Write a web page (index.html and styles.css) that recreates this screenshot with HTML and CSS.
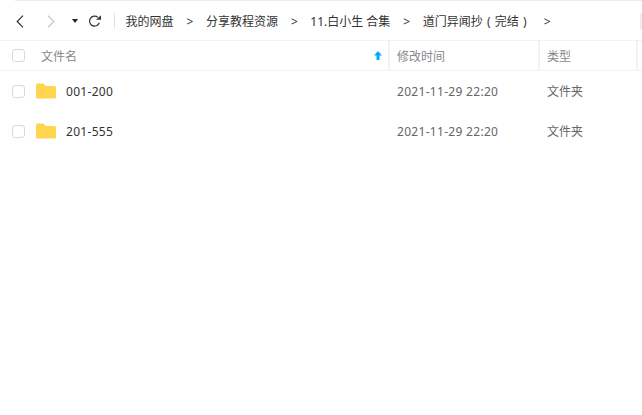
FILE: index.html
```html
<!DOCTYPE html>
<html lang="zh-CN">
<head>
  <meta charset="UTF-8" />
  <title>文件列表</title>
  <link rel="stylesheet" href="styles.css">
</head>
<body>

<div class="top-line"></div>

<div class="toolbar">
  <div class="nav">
    <svg class="nav-back" width="8" height="13" viewBox="0 0 8 13"><path d="M7 .7 1.200 6.500 7 12.300" fill="none" stroke="#333" stroke-width="1.200"/></svg>
    <svg class="nav-forward" width="8" height="13" viewBox="0 0 8 13"><path d="M1 .7 6.800 6.500 1 12.300" fill="none" stroke="#c4c4c4" stroke-width="1.200"/></svg>
    <span class="nav-drop"></span>
    <svg class="nav-refresh" width="13" height="12" viewBox="0 0 13 12"><path d="M11.300 7.800A5 5 0 1 1 9.800 2.300" fill="none" stroke="#333" stroke-width="1.200"/><path d="M8 4.800h5V.3z" fill="#333"/></svg>
  </div>
  <div class="crumbs">
    <span>我的网盘</span><i>&gt;</i>
    <span>分享教程资源</span><i>&gt;</i>
    <span>11.白小生 合集</span><i>&gt;</i>
    <span>道门异闻抄<span class="paren">(</span>完结<span class="paren">)</span></span><i>&gt;</i>
  </div>
  <div class="toolbar-end"></div>
</div>

<div class="list-head">
  <div class="col-check"><span class="check"></span></div>
  <div class="col-name">
    <span class="head-name">文件名</span>
    <svg class="sort-arrow" width="8" height="9" viewBox="0 0 8 9"><path d="M4 0 8 4.500H5.500V9h-3V4.500H0z" fill="#06a7ff"/></svg>
  </div>
  <div class="col-time">修改时间</div>
  <div class="col-type">类型</div>
</div>

<div class="row">
  <div class="col-check"><span class="check"></span></div>
  <div class="col-name">
    <svg class="folder" width="20" height="16" viewBox="0 0 20 16"><path d="M0 2a1.500 1.500 0 0 1 1.500-1.500h5.300c.7 0 1.100.3 1.500.8L9.500 3H18.500A1.500 1.500 0 0 1 20 4.500V14a1.500 1.500 0 0 1-1.500 1.500h-17A1.500 1.500 0 0 1 0 14z" fill="#ffd54f"/></svg>
    <span class="file-name">001-200</span>
  </div>
  <div class="col-time">2021-11-29 22:20</div>
  <div class="col-type">文件夹</div>
</div>

<div class="row">
  <div class="col-check"><span class="check"></span></div>
  <div class="col-name">
    <svg class="folder" width="20" height="16" viewBox="0 0 20 16"><path d="M0 2a1.500 1.500 0 0 1 1.500-1.500h5.300c.7 0 1.100.3 1.500.8L9.500 3H18.500A1.500 1.500 0 0 1 20 4.500V14a1.500 1.500 0 0 1-1.500 1.500h-17A1.500 1.500 0 0 1 0 14z" fill="#ffd54f"/></svg>
    <span class="file-name">201-555</span>
  </div>
  <div class="col-time">2021-11-29 22:20</div>
  <div class="col-type">文件夹</div>
</div>

</body>
</html>
```

FILE: styles.css
```css
body {
  margin: 0;
  background: #fff;
  color: #333;
  font-family: "Noto Sans", "Noto Sans CJK SC", sans-serif;
  font-size: 12px;
  line-height: 16px;
  overflow: hidden;
}

.top-line {
  height: 1px;
  margin-left: 15px;
  background: #ececec;
}

.toolbar {
  display: flex;
  align-items: center;
  height: 38px;
  padding-top: 1px;
  border-bottom: 1px solid #f2f2f2;
}

.nav {
  display: flex;
  align-items: center;
  width: 115px;
  height: 16px;
  padding-left: 16px;
  box-sizing: border-box;
  border-right: 1px solid #e0e0e0;
}

.nav-back {
  margin-right: 23px;
}

.nav-forward {
  margin-right: 17px;
}

.nav-drop {
  width: 0;
  height: 0;
  border-left: 3px solid transparent;
  border-right: 3px solid transparent;
  border-top: 4px solid #222;
  margin-right: 10px;
}

.crumbs {
  display: flex;
  align-items: center;
  flex: 1;
  padding: 1px 0 0 10.5px;
  color: #333;
}

.crumbs i {
  font-style: normal;
  margin: 0 12.5px 0 13px;
}

.paren {
  display: inline-block;
  width: 12px;
  text-align: center;
}

.toolbar-end {
  width: 2px;
  height: 16px;
  background: #eee;
}

.list-head,
.row {
  display: flex;
  align-items: center;
}

.list-head {
  height: 29px;
  border-bottom: 1px solid #f2f2f2;
  color: #888;
}

.row {
  height: 40px;
}

.col-check {
  display: flex;
  width: 36px;
  padding-left: 12px;
  box-sizing: border-box;
}

.check {
  width: 11px;
  height: 11px;
  border: 1px solid #d9d9d9;
  border-radius: 3px;
}

.col-name {
  display: flex;
  align-items: center;
  width: 352px;
  height: 100%;
  box-sizing: border-box;
}

.list-head .col-name {
  padding-left: 5px;
  padding-right: 6px;
  justify-content: space-between;
}

.head-name,
.file-name {
  padding-top: 2px;
}

.col-time {
  display: flex;
  align-items: center;
  width: 150px;
  height: 100%;
  padding: 2px 0 0 9px;
  box-sizing: border-box;
  color: #666;
  letter-spacing: 0.3px;
}

.col-type {
  display: flex;
  align-items: center;
  width: 100px;
  height: 100%;
  padding: 2px 0 0 9px;
  box-sizing: border-box;
  color: #666;
}

.list-head .col-time,
.list-head .col-type {
  color: #888;
  border-left: 2px solid #f2f2f2;
  padding-left: 7px;
  letter-spacing: 0;
}

.list-head .col-type {
  border-right: 2px solid #f2f2f2;
}

.folder {
  margin-right: 10px;
}

.file-name {
  color: #333;
  letter-spacing: 0.3px;
}
```
